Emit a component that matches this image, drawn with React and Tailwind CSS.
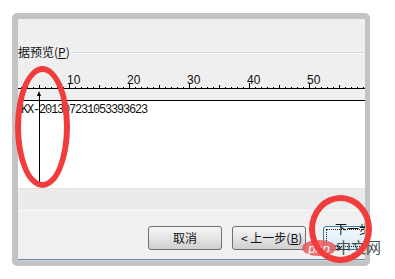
import React from "react";

const CJK = { fontFamily: '"Noto Sans CJK SC", "Noto Sans", sans-serif' };

const Ruler = () => {
  const ticks = [];
  for (let n = 2; n <= 60; n++) {
    const x = 6 * n - 9 + 0.5;
    let h = 1;
    if (n % 10 === 0) h = 5;
    else if (n % 5 === 0) h = 3;
    ticks.push(<line key={n} x1={x} x2={x} y1={28 - h} y2={28} stroke="#000" strokeWidth="1" />);
  }
  const labels = [10, 20, 30, 40, 50];
  return (
    <svg width="347" height="40" className="block">
      {ticks}
      <line x1="0" x2="347" y1="28.5" y2="28.5" stroke="#000" strokeWidth="1" />
      {labels.map((n) => (
        <text
          key={n}
          x={6 * n - 9 - 2}
          y="24"
          fontSize="12"
          fontFamily="Liberation Sans, Arial, sans-serif"
          fill="#111"
        >
          {n}
        </text>
      ))}
    </svg>
  );
};

const WinButton = ({ children, className = "" }) => (
  <div
    className={`h-[24px] w-[74px] shrink-0 rounded-[3px] border border-[#707070] bg-gradient-to-b from-[#f6f6f6] via-[#e4e4e4] to-[#cfcfcf] flex items-center justify-center text-[12px] text-[#111] ${className}`}
    style={CJK}
  >
    {children}
  </div>
);

export default function App() {
  return (
    <div className="relative w-[395px] h-[279px] bg-white overflow-hidden">
      <div className="pt-[13px] pl-[12px]">
        <div className="w-[358px] h-[253px] border-l-[6px] border-t-[6px] border-r-[5px] border-b-[5px] border-[#c3c3c3] rounded-[5px] bg-[#efefef] overflow-hidden flex flex-col">
          <div className="h-[27px] shrink-0" />

          {/* group label */}
          <div className="h-[14px] shrink-0 flex items-start">
            <span className="text-[12px] leading-[12px] text-[#111] whitespace-nowrap" style={CJK}>
              据预览(<span className="underline">P</span>)
            </span>
            <div className="flex-1 mt-[6px] ml-[2px] border-t border-[#d8d8d8] border-b border-b-white" />
          </div>

          {/* ruler */}
          <div className="h-[40px] shrink-0">
            <Ruler />
          </div>

          <div className="h-px shrink-0 bg-black" />

          {/* preview text */}
          <div className="h-[87px] shrink-0 bg-white pt-[2px]">
            <div
              className="ml-[-3px] text-[12px] leading-[14px] tracking-[-1.2px] text-[#111] whitespace-nowrap"
              style={{ fontFamily: '"Liberation Mono", monospace' }}
            >
              YKX-201307231053393623
            </div>
          </div>

          <div className="h-[22px] shrink-0 bg-[#ebebeb] border-t border-[#e2e2e2]" />
          <div className="h-px shrink-0 bg-[#fafafa]" />

          {/* buttons */}
          <div className="h-[48px] shrink-0 flex items-start pt-[15px] pl-[130px] bg-[#f0f0f0]">
            <WinButton>取消</WinButton>
            <WinButton className="ml-[10px] justify-start pl-[8px]">
              &lt; 上一步(<span className="underline">B</span>)
            </WinButton>
            <div
              className="ml-[17px] h-[24px] w-[74px] shrink-0 rounded-[3px] border border-[#3c7fb1] bg-gradient-to-b from-[#f4fafd] via-[#e6f2fa] to-[#d4e8f5] p-[2px]"
              style={CJK}
            >
              <div className="h-full w-full border border-dotted border-[#222] flex items-center pl-[8px] text-[12px] text-[#111]">
                下一步(N) &gt;
              </div>
            </div>
          </div>

          <div className="h-px shrink-0 bg-[#6f87a2]" />
          <div className="h-px shrink-0 bg-[#c9d5e2]" />
        </div>
      </div>

      {/* column marker arrow */}
      <div className="absolute left-[39px] top-[96px] w-px h-[86px] bg-black" />
      <div className="absolute left-[37px] top-[91px] w-0 h-0 border-l-[2.5px] border-r-[2.5px] border-b-[5px] border-l-transparent border-r-transparent border-b-black" />

      {/* red annotations */}
      <div className="absolute left-[15px] top-[66px] w-[55px] h-[122px] rounded-[50%] border-[6px] border-[#f03c3c]" />

      {/* watermark */}
      <div className="absolute left-[302px] top-[240px] w-[34px] h-[16px] rounded-[50%] bg-[#e85a5a]/85 flex items-center justify-center">
        <span className="text-white italic text-[13px] leading-none" style={{ fontFamily: '"Liberation Sans", Arial, sans-serif' }}>php</span>
      </div>
      <div className="absolute left-[336px] top-[238px] text-[15px] leading-[18px] text-[#333]/90 whitespace-nowrap" style={CJK}>
        中文网
      </div>

      <div className="absolute left-[309px] top-[195px] w-[63px] h-[68px] rounded-[50%] border-[6px] border-[#f03c3c]" />
    </div>
  );
}
